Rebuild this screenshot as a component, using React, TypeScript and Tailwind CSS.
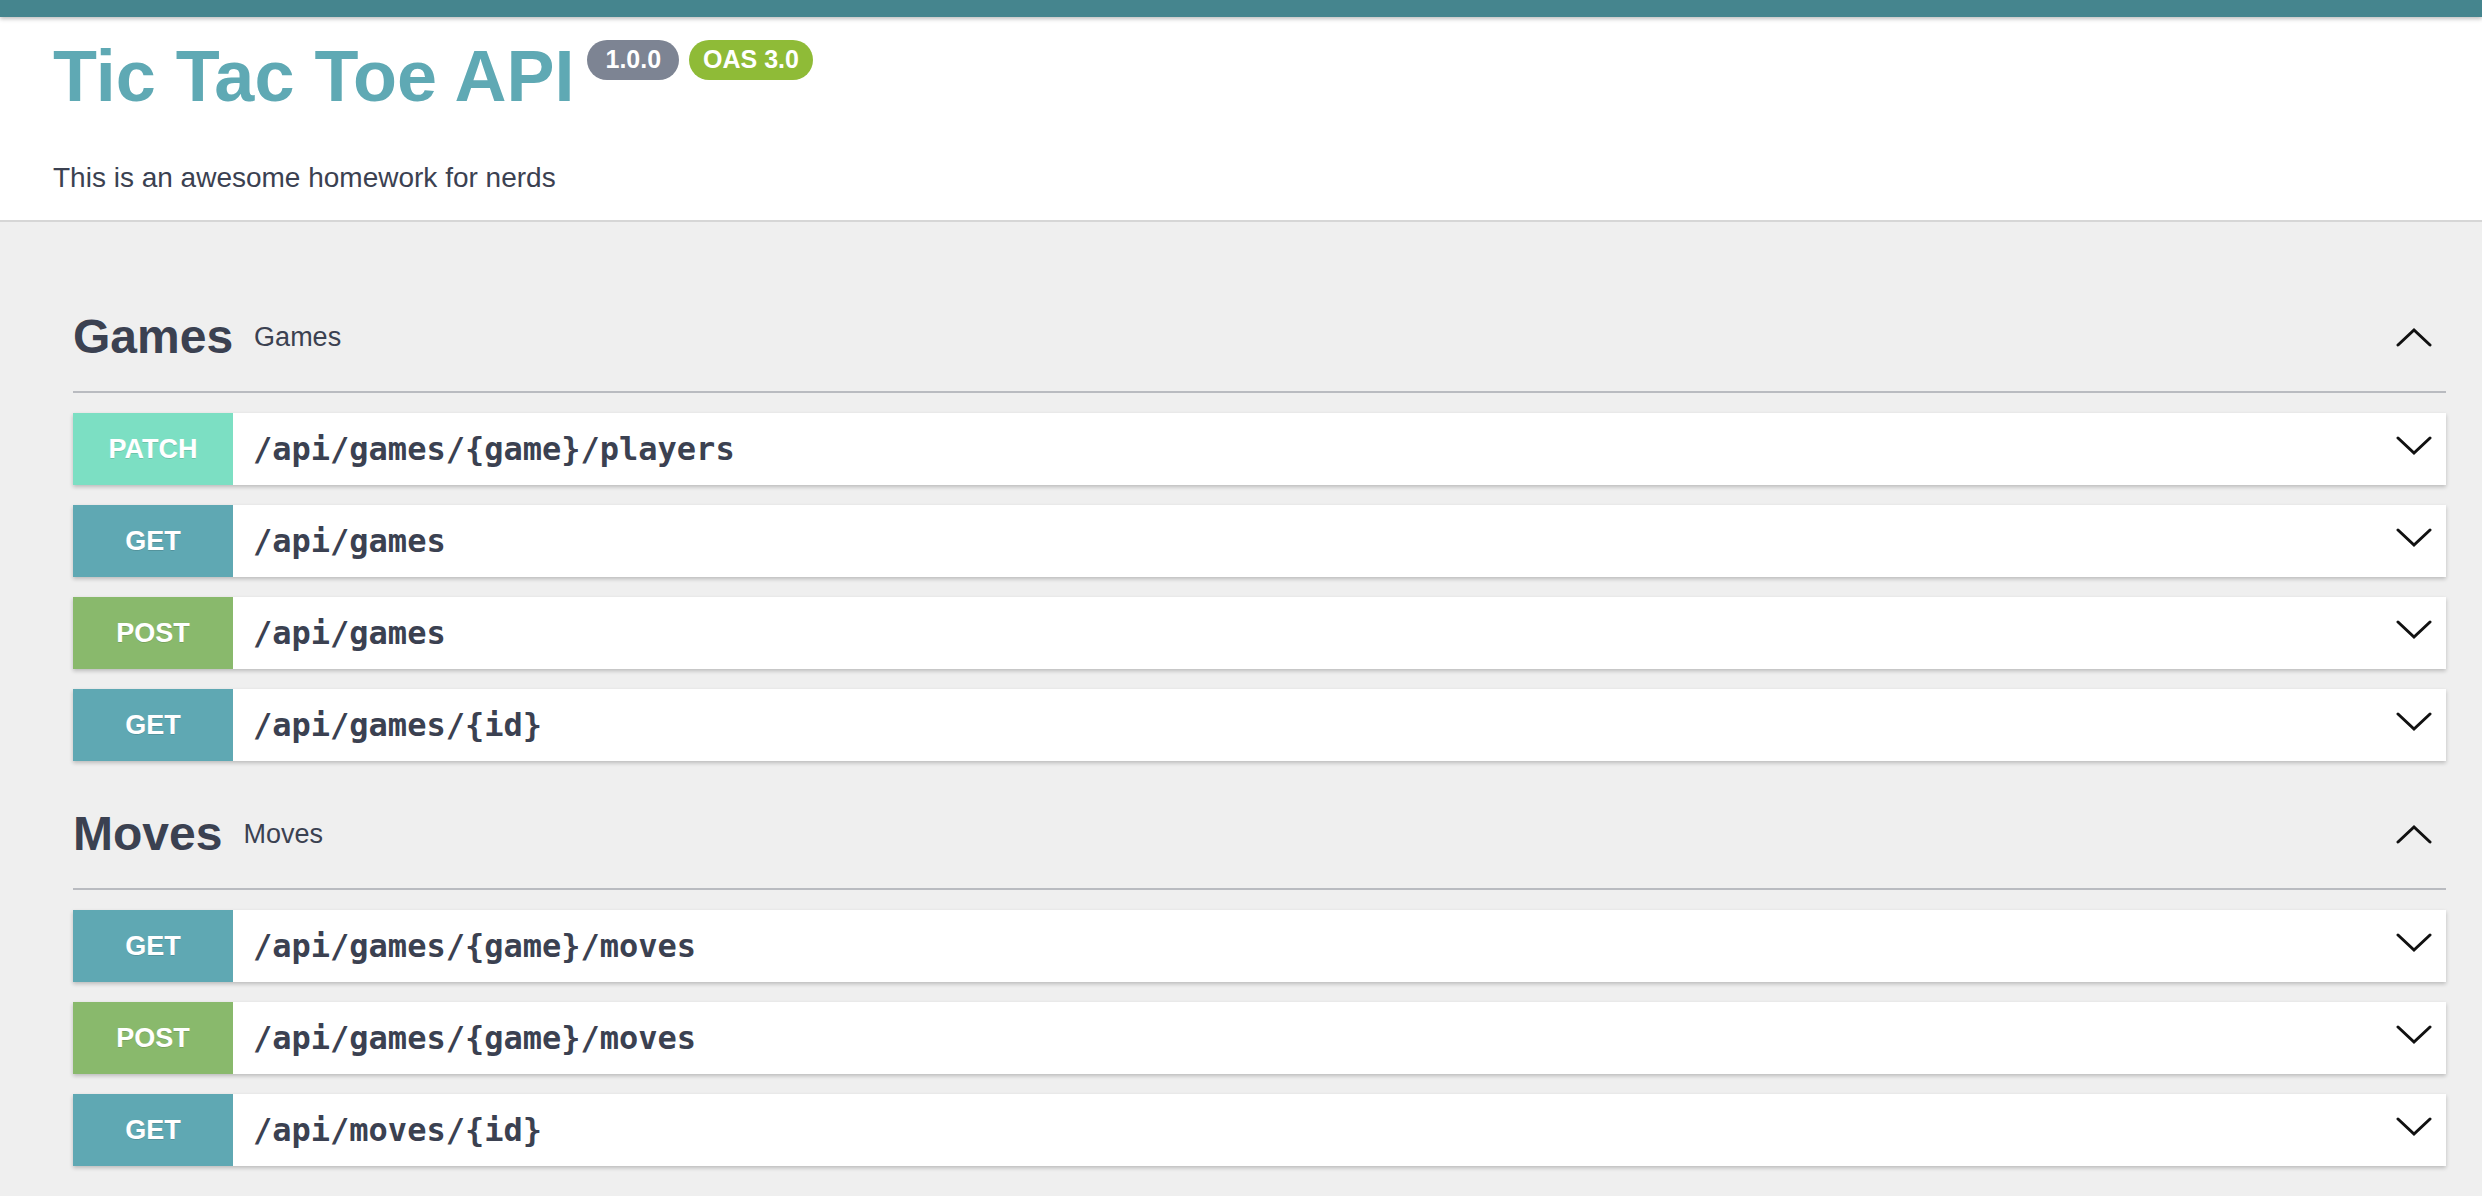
import React from "react";

type Op = { method: "GET" | "POST" | "PATCH"; path: string };

const methodColors: Record<Op["method"], string> = {
  GET: "bg-[#5fa8b3]",
  POST: "bg-[#89b96c]",
  PATCH: "bg-[#7cdfc3]",
};

const sections: { name: string; desc: string; ops: Op[] }[] = [
  {
    name: "Games",
    desc: "Games",
    ops: [
      { method: "PATCH", path: "/api/games/{game}/players" },
      { method: "GET", path: "/api/games" },
      { method: "POST", path: "/api/games" },
      { method: "GET", path: "/api/games/{id}" },
    ],
  },
  {
    name: "Moves",
    desc: "Moves",
    ops: [
      { method: "GET", path: "/api/games/{game}/moves" },
      { method: "POST", path: "/api/games/{game}/moves" },
      { method: "GET", path: "/api/moves/{id}" },
    ],
  },
];

function Chevron({ up }: { up?: boolean }) {
  return (
    <svg width="36" height="20" viewBox="0 0 36 20" fill="none" className="shrink-0">
      <polyline
        points={up ? "2,18 18,3 34,18" : "2,2 18,17 34,2"}
        stroke="#111"
        strokeWidth="3"
        strokeLinecap="round"
        strokeLinejoin="miter"
      />
    </svg>
  );
}

function OpRow({ op }: { op: Op }) {
  return (
    <div className="flex h-[72px] items-center bg-white shadow-[0_2px_4px_rgba(0,0,0,0.22)]">
      <div
        className={`flex h-full w-[160px] shrink-0 items-center justify-center text-[27px] font-bold text-white [text-shadow:0_1px_0_rgba(0,0,0,0.12)] ${methodColors[op.method]}`}
      >
        {op.method}
      </div>
      <div className="ml-[20px] flex-1 font-['DejaVu_Sans_Mono',monospace] text-[32px] font-bold text-[#3b4151]">
        {op.path}
      </div>
      <div className="mr-[14px] mb-[6px]">
        <Chevron />
      </div>
    </div>
  );
}

export default function App() {
  return (
    <div className="min-h-screen bg-[#efefef] font-['Liberation_Sans',Arial,sans-serif]">
      <div className="relative z-10 h-[17px] bg-[#45858e] shadow-[0_2px_4px_rgba(0,0,0,0.25)]" />

      <header className="border-b-2 border-[#d6d6d6] bg-white pl-[53px] pt-[23px] pb-[28px]">
        <div className="flex items-start">
          <h1 className="text-[72px] font-bold leading-none text-[#5fa9b4]">
            Tic Tac Toe API
          </h1>
          <div className="ml-[13px] flex gap-[10px]">
            <span className="flex h-[40px] items-center rounded-full bg-[#7d8493] px-[18px] text-[25px] font-bold text-white">
              1.0.0
            </span>
            <span className="flex h-[40px] items-center rounded-full bg-[#8fbb37] px-[14px] text-[25px] font-bold text-white">
              OAS 3.0
            </span>
          </div>
        </div>
        <p className="mt-[52px] text-[28px] leading-none text-[#3b4151]">
          This is an awesome homework for nerds
        </p>
      </header>

      <main className="pl-[73px] pr-[36px] pt-[42px] pb-[20px]">
        {sections.map((s) => (
          <section key={s.name} className="pt-[49px]">
            <div className="flex items-center border-b-2 border-[#b9bbc0] pb-[30px]">
              <h2 className="text-[48px] font-bold leading-none text-[#3b4151]">{s.name}</h2>
              <span className="ml-[21px] text-[27px] leading-none text-[#3b4151]">{s.desc}</span>
              <div className="ml-auto mr-[14px]">
                <Chevron up />
              </div>
            </div>
            <div className="mt-[20px] flex flex-col gap-[20px]">
              {s.ops.map((op, i) => (
                <OpRow key={i} op={op} />
              ))}
            </div>
          </section>
        ))}
      </main>
    </div>
  );
}
